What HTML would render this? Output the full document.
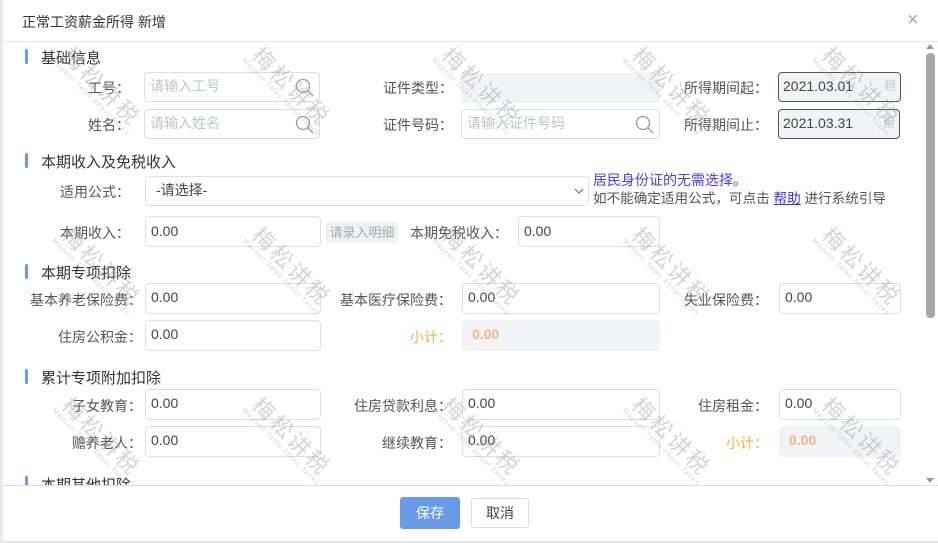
<!DOCTYPE html>
<html><head><meta charset="utf-8"><style>
*{box-sizing:border-box;margin:0;padding:0}
body{width:938px;height:543px;background:#fff;font-family:"Liberation Sans","Noto Sans CJK SC",sans-serif;font-size:14px;color:#444;position:relative;overflow:hidden}
.a{position:absolute}
.lbl{position:absolute;text-align:right;white-space:nowrap;color:#555;line-height:20px}
.in{position:absolute;border:1px solid #dcdfe6;border-radius:4px;background:#fff;padding-left:5px;color:#444;line-height:27px;white-space:nowrap}
.ph{color:#c0c4cc}
.dis{background:#f2f3f7;border-color:#f2f3f7}
.sec{position:absolute;left:25px;font-size:15px;color:#333}
.sec:before{content:"";position:absolute;left:0;top:2px;width:3px;height:15px;background:#6a9be8;border-radius:2px}
.sec span{margin-left:16px}
.wm{position:absolute;transform:rotate(45deg);color:rgba(160,160,160,.45);font-size:22px;letter-spacing:3px;white-space:nowrap;text-align:center;line-height:22px}
.wm small{display:block;font-size:7px;letter-spacing:1px;line-height:8px}
.srch{position:absolute;right:4px;top:5px}
</style></head><body>
<div class="a" style="left:0;top:0;width:3px;height:543px;background:#e8e8e8"></div>
<div class="a" style="left:22px;top:12px;font-size:14px;color:#333">正常工资薪金所得 新增</div>
<div class="a" style="left:907px;top:10px;font-size:20px;color:#aaa;line-height:20px">×</div>
<div class="a" style="left:3px;top:41px;width:935px;height:1px;background:#e5e5e5"></div>
<div class="a" style="left:926px;top:44px;width:0;height:0;border-left:4px solid transparent;border-right:4px solid transparent;border-bottom:5px solid #999"></div>
<div class="a" style="left:926px;top:53px;width:9px;height:265px;background:#a8a8a8;border-radius:4px"></div>
<div class="a" style="left:926px;top:478px;width:0;height:0;border-left:4px solid transparent;border-right:4px solid transparent;border-top:5px solid #999"></div>

<div class="sec" style="top:47px"><span>基础信息</span></div>
<div class="lbl" style="right:808px;top:78px">工号：</div>
<div class="in" style="left:144px;top:72px;width:176px;height:30px"><span class="ph">请输入工号</span><svg class="srch" width="20" height="20" viewBox="0 0 20 20"><circle cx="8" cy="8" r="6.5" fill="none" stroke="#999" stroke-width="1.3"/><path d="M13 13l5 5" stroke="#999" stroke-width="1.3"/></svg></div>
<div class="lbl" style="right:808px;top:115px">姓名：</div>
<div class="in" style="left:144px;top:109px;width:176px;height:30px"><span class="ph">请输入姓名</span><svg class="srch" width="20" height="20" viewBox="0 0 20 20"><circle cx="8" cy="8" r="6.5" fill="none" stroke="#999" stroke-width="1.3"/><path d="M13 13l5 5" stroke="#999" stroke-width="1.3"/></svg></div>
<div class="lbl" style="right:485px;top:78px">证件类型：</div>
<div class="in dis" style="left:461px;top:73px;width:199px;height:30px"></div>
<div class="lbl" style="right:485px;top:115px">证件号码：</div>
<div class="in" style="left:461px;top:109px;width:199px;height:30px"><span class="ph">请输入证件号码</span><svg class="srch" width="20" height="20" viewBox="0 0 20 20"><circle cx="8" cy="8" r="6.5" fill="none" stroke="#999" stroke-width="1.3"/><path d="M13 13l5 5" stroke="#999" stroke-width="1.3"/></svg></div>
<div class="lbl" style="right:170px;top:78px">所得期间起：</div>
<div class="in" style="left:778px;top:72px;width:123px;height:30px;border-color:#555;background:#f2f3f7;padding-left:4px">2021.03.01<span style="position:absolute;right:4px;top:0;color:#bbb;font-size:12px">▦</span></div>
<div class="lbl" style="right:170px;top:115px">所得期间止：</div>
<div class="in" style="left:778px;top:109px;width:122px;height:30px;border-color:#555;background:#f2f3f7;padding-left:4px">2021.03.31<span style="position:absolute;right:4px;top:0;color:#bbb;font-size:12px">▦</span></div>

<div class="sec" style="top:151px"><span>本期收入及免税收入</span></div>
<div class="lbl" style="right:808px;top:182px">适用公式：</div>
<div class="in" style="left:145px;top:176px;width:444px;height:30px;padding-left:10px">-请选择-<svg style="position:absolute;right:4px;top:10px" width="10" height="8" viewBox="0 0 10 8"><path d="M1 2l4 4 4-4" fill="none" stroke="#666"/></svg></div>
<div class="a" style="left:593px;top:170px;color:#4b3cf5;line-height:20px">居民身份证的无需选择。</div>
<div class="a" style="left:593px;top:189px;color:#555;line-height:20px;white-space:nowrap;font-size:13.6px">如不能确定适用公式，可点击 <span style="color:#3b30e8;text-decoration:underline">帮助</span> 进行系统引导</div>
<div class="lbl" style="right:808px;top:223px">本期收入：</div>
<div class="in" style="left:145px;top:216px;width:176px;height:31px;line-height:29px">0.00</div>
<div class="a" style="left:326px;top:222px;width:72px;height:21px;background:#f0f1f4;border-radius:3px;color:#aaa;font-size:13px;text-align:center;line-height:21px">请录入明细</div>
<div class="lbl" style="right:430px;top:223px">本期免税收入：</div>
<div class="in" style="left:518px;top:216px;width:142px;height:31px;line-height:29px">0.00</div>

<div class="sec" style="top:262px"><span>本期专项扣除</span></div>
<div class="lbl" style="right:796px;top:290px">基本养老保险费：</div>
<div class="in" style="left:145px;top:283px;width:176px;height:31px">0.00</div>
<div class="lbl" style="right:486px;top:290px">基本医疗保险费：</div>
<div class="in" style="left:462px;top:283px;width:198px;height:31px">0.00</div>
<div class="lbl" style="right:170px;top:290px">失业保险费：</div>
<div class="in" style="left:779px;top:283px;width:122px;height:31px">0.00</div>
<div class="lbl" style="right:796px;top:327px">住房公积金：</div>
<div class="in" style="left:145px;top:320px;width:176px;height:31px">0.00</div>
<div class="lbl" style="right:486px;top:327px;color:#f5b342">小计：</div>
<div class="in dis" style="left:462px;top:320px;width:198px;height:31px;color:#f6b784;font-weight:bold;padding-left:9px">0.00</div>

<div class="sec" style="top:367px"><span>累计专项附加扣除</span></div>
<div class="lbl" style="right:796px;top:396px">子女教育：</div>
<div class="in" style="left:145px;top:389px;width:176px;height:31px">0.00</div>
<div class="lbl" style="right:486px;top:396px">住房贷款利息：</div>
<div class="in" style="left:462px;top:389px;width:198px;height:31px">0.00</div>
<div class="lbl" style="right:170px;top:396px">住房租金：</div>
<div class="in" style="left:779px;top:389px;width:122px;height:31px">0.00</div>
<div class="lbl" style="right:796px;top:433px">赡养老人：</div>
<div class="in" style="left:145px;top:426px;width:176px;height:31px">0.00</div>
<div class="lbl" style="right:486px;top:433px">继续教育：</div>
<div class="in" style="left:462px;top:426px;width:198px;height:31px">0.00</div>
<div class="lbl" style="right:170px;top:433px;color:#f5b342">小计：</div>
<div class="in dis" style="left:779px;top:426px;width:122px;height:31px;color:#f6b784;font-weight:bold;padding-left:9px">0.00</div>

<div class="a" style="left:0;top:472px;width:925px;height:13px;overflow:hidden"><div class="sec" style="top:2px"><span>本期其他扣除</span></div></div>
<div class="a" style="left:3px;top:485px;width:935px;height:1px;background:#e0e0e0"></div>
<div class="a" style="left:400px;top:497px;width:60px;height:32px;background:#6a9be8;border-radius:3px;color:#fff;text-align:center;line-height:32px">保存</div>
<div class="a" style="left:471px;top:498px;width:58px;height:30px;border:1px solid #ddd;border-radius:3px;color:#444;text-align:center;line-height:28px">取消</div>
<div class="a" style="left:3px;top:541px;width:935px;height:2px;background:#e5e5e5"></div>

<div class="wm" style="left:45px;top:75px">梅松讲税<small>Mayson Talks About Taxes</small></div>
<div class="wm" style="left:235px;top:75px">梅松讲税<small>Mayson Talks About Taxes</small></div>
<div class="wm" style="left:425px;top:75px">梅松讲税<small>Mayson Talks About Taxes</small></div>
<div class="wm" style="left:615px;top:75px">梅松讲税<small>Mayson Talks About Taxes</small></div>
<div class="wm" style="left:805px;top:75px">梅松讲税<small>Mayson Talks About Taxes</small></div>
<div class="wm" style="left:45px;top:255px">梅松讲税<small>Mayson Talks About Taxes</small></div>
<div class="wm" style="left:235px;top:255px">梅松讲税<small>Mayson Talks About Taxes</small></div>
<div class="wm" style="left:425px;top:255px">梅松讲税<small>Mayson Talks About Taxes</small></div>
<div class="wm" style="left:615px;top:255px">梅松讲税<small>Mayson Talks About Taxes</small></div>
<div class="wm" style="left:805px;top:255px">梅松讲税<small>Mayson Talks About Taxes</small></div>
<div class="wm" style="left:45px;top:425px">梅松讲税<small>Mayson Talks About Taxes</small></div>
<div class="wm" style="left:235px;top:425px">梅松讲税<small>Mayson Talks About Taxes</small></div>
<div class="wm" style="left:425px;top:425px">梅松讲税<small>Mayson Talks About Taxes</small></div>
<div class="wm" style="left:615px;top:425px">梅松讲税<small>Mayson Talks About Taxes</small></div>
<div class="wm" style="left:805px;top:425px">梅松讲税<small>Mayson Talks About Taxes</small></div>
</body></html>
